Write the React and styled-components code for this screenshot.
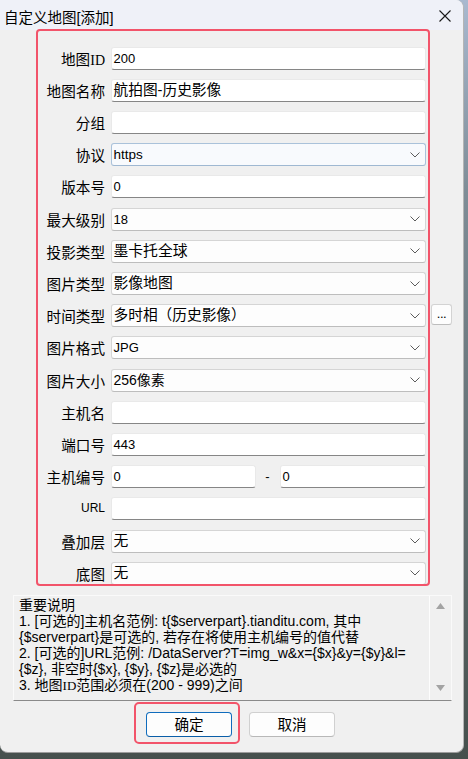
import React from 'react';
import styled, { createGlobalStyle } from 'styled-components';

const Global = createGlobalStyle`
  html, body { margin: 0; padding: 0; }
  body {
    width: 468px;
    height: 759px;
    overflow: hidden;
    background: linear-gradient(180deg, #a9b9cf 0%, #7f8d97 25%, #46504d 100%);
    font-family: "Noto Sans CJK SC", sans-serif;
    color: #000;
  }
`;

const Window = styled.div`
  position: relative;
  width: 464px;
  height: 753px;
  box-sizing: border-box;
  background: #f0f0f0;
  border-radius: 0 8px 8px 8px;
  border-right: 1px solid #b5b5b5;
  border-bottom: 1px solid #9c9c9c;
  overflow: hidden;
  display: flex;
  flex-direction: column;
`;

const TitleBar = styled.div`
  flex: none;
  height: 30px;
  box-sizing: border-box;
  padding: 2px 12px 0 4px;
  background: #eff1f8;
  display: flex;
  align-items: center;
  justify-content: space-between;
  font-family: "Liberation Sans", "Noto Sans CJK SC", sans-serif;
  font-size: 14.5px;
`;

const CloseIcon = () => (
  <svg width="12" height="12" viewBox="0 0 12 12">
    <path d="M0.5 0.5 L11.5 11.5 M11.5 0.5 L0.5 11.5" stroke="#1a1a1a" strokeWidth="1.1" fill="none" />
  </svg>
);

const Form = styled.div`
  position: relative;
  display: grid;
  grid-template-columns: 67px 315px 21px;
  grid-auto-rows: 23px;
  column-gap: 5.5px;
  row-gap: 9.2px;
  padding: 16.7px 0 0 38px;
`;

const Highlight = styled.div`
  position: absolute;
  pointer-events: none;
  border: 2.5px solid #f2546a;
  border-radius: ${p => p.$r || 4}px;
  top: ${p => p.$t}px;
  right: ${p => p.$rt}px;
  bottom: ${p => p.$b}px;
  left: ${p => p.$l}px;
`;

const Label = styled.div`
  grid-column: 1;
  text-align: right;
  white-space: nowrap;
  font-family: ${p => (p.$latin ? '"Liberation Sans", sans-serif' : '"Noto Sans CJK SC", sans-serif')};
  font-size: ${p => (p.$latin ? '12px' : '14.6px')};
  line-height: 23px;
`;

const Serif = styled.span`
  font-family: "Liberation Serif", serif;
  font-size: ${p => p.$size || 14}px;
`;

const Field = styled.div`
  grid-column: 2;
  display: flex;
  align-items: center;
  min-width: 0;
`;

const TextBox = styled.div`
  box-sizing: border-box;
  height: 23px;
  width: ${p => (p.$w ? `${p.$w}px` : '100%')};
  flex: none;
  background: #fff;
  border: 1px solid #e9e9e9;
  border-bottom: 1px solid #868686;
  border-radius: 3px;
  padding: 0 4px 0 2px;
  display: flex;
  align-items: center;
`;

const SelectBox = styled.div`
  box-sizing: border-box;
  height: 23px;
  width: 100%;
  background: ${p => (p.$focused ? '#f8fafd' : '#fdfdfd')};
  border: 1px solid ${p => (p.$focused ? '#aac2da' : '#d5d5d5')};
  border-bottom-color: ${p => (p.$focused ? '#9fb8d2' : '#bdbdbd')};
  border-radius: 3px;
  padding: 0 5px 0 2px;
  display: flex;
  align-items: center;
  justify-content: space-between;
`;

const Value = styled.span`
  font-family: "Liberation Sans", "Noto Sans CJK SC", sans-serif;
  font-size: ${p => p.$size}px;
  line-height: 1;
  white-space: nowrap;
`;

const Chevron = () => (
  <svg width="10" height="6" viewBox="0 0 10 6">
    <path d="M0.5 0.5 L5 5 L9.5 0.5" stroke="#5c5c5c" strokeWidth="1" fill="none" />
  </svg>
);

const Dash = styled.span`
  flex: 1;
  text-align: center;
  font-family: "Liberation Sans", sans-serif;
  font-size: 13px;
`;

const MoreButton = styled.div`
  grid-column: 3;
  box-sizing: border-box;
  width: 21px;
  height: 21px;
  background: #fdfdfd;
  border: 1px solid #d3d3d3;
  border-bottom-color: #bdbdbd;
  border-radius: 3px;
  display: flex;
  align-items: flex-end;
  justify-content: center;
  padding-bottom: 4px;
  font-family: "Liberation Sans", sans-serif;
  font-size: 13px;
  line-height: 1;
  letter-spacing: -0.5px;
`;

const Notes = styled.div`
  box-sizing: border-box;
  margin: 10px 0 0 13px;
  width: 439px;
  height: 106px;
  border: 1px solid #fafafa;
  border-bottom: 1px solid #8a8a8a;
  display: flex;
  flex: none;
`;

const NotesText = styled.div`
  flex: 1;
  padding: 1px 0 0 5px;
  font-family: "Liberation Sans", "Noto Sans CJK SC", sans-serif;
  font-size: 14px;
  line-height: 16px;
  white-space: nowrap;
  overflow: hidden;
`;

const Line = styled.div``;

const ScrollBar = styled.div`
  flex: none;
  width: 21px;
  border-left: 1px solid #fdfdfd;
  display: flex;
  flex-direction: column;
  justify-content: space-between;
  align-items: center;
  padding: 7px 0 9px;
`;

const Arrow = ({ down }) => (
  <svg width="9" height="6" viewBox="0 0 9 6">
    <path d={down ? 'M0 0 L9 0 L4.5 6 Z' : 'M0 6 L9 6 L4.5 0 Z'} fill="#a3a3a3" />
  </svg>
);

const ButtonRow = styled.div`
  display: flex;
  gap: 17px;
  margin-top: 11px;
  padding-left: 146px;
`;

const ButtonWrap = styled.div`
  position: relative;
`;

const Button = styled.div`
  box-sizing: border-box;
  width: 86px;
  height: 25px;
  background: #fdfdfd;
  border: 1px solid ${p => (p.$primary ? '#0f6cbd' : '#d0d0d0')};
  border-bottom-color: ${p => (p.$primary ? '#0a5ea8' : '#b8b8b8')};
  border-radius: 4px;
  display: flex;
  align-items: center;
  justify-content: center;
  font-family: "Noto Sans CJK SC", sans-serif;
  font-size: 14.6px;
  line-height: 1;
`;

const rows = [
  { label: <>地图<Serif>ID</Serif></>, kind: 'text', value: '200', size: 13 },
  { label: '地图名称', kind: 'text', value: '航拍图-历史影像', size: 14.7 },
  { label: '分组', kind: 'text', value: '' },
  { label: '协议', kind: 'select', value: 'https', size: 13.5, focused: true },
  { label: '版本号', kind: 'text', value: '0', size: 13 },
  { label: '最大级别', kind: 'select', value: '18', size: 13 },
  { label: '投影类型', kind: 'select', value: '墨卡托全球', size: 14.8 },
  { label: '图片类型', kind: 'select', value: '影像地图', size: 14.8 },
  { label: '时间类型', kind: 'select', value: '多时相（历史影像）', size: 14.7, more: true },
  { label: '图片格式', kind: 'select', value: 'JPG', size: 13 },
  { label: '图片大小', kind: 'select', value: '256像素', size: 14 },
  { label: '主机名', kind: 'text', value: '' },
  { label: '端口号', kind: 'text', value: '443', size: 13 },
  { label: '主机编号', kind: 'pair', value: ['0', '0'], size: 13 },
  { label: 'URL', kind: 'text', value: '', latin: true },
  { label: '叠加层', kind: 'select', value: '无', size: 14.8 },
  { label: '底图', kind: 'select', value: '无', size: 14.8 },
];

function Row({ row }) {
  let field;
  if (row.kind === 'text') {
    field = (
      <TextBox>
        <Value $size={row.size || 13}>{row.value}</Value>
      </TextBox>
    );
  } else if (row.kind === 'select') {
    field = (
      <SelectBox $focused={row.focused}>
        <Value $size={row.size}>{row.value}</Value>
        <Chevron />
      </SelectBox>
    );
  } else {
    field = (
      <>
        <TextBox $w={145}>
          <Value $size={row.size}>{row.value[0]}</Value>
        </TextBox>
        <Dash>-</Dash>
        <TextBox $w={146}>
          <Value $size={row.size}>{row.value[1]}</Value>
        </TextBox>
      </>
    );
  }
  return (
    <>
      <Label $latin={row.latin}>{row.label}</Label>
      <Field>{field}</Field>
      {row.more && <MoreButton>...</MoreButton>}
    </>
  );
}

export default function App() {
  return (
    <>
      <Global />
      <Window>
        <TitleBar>
          <span>自定义地图[添加]</span>
          <CloseIcon />
        </TitleBar>
        <Form>
          {rows.map((r, i) => (
            <Row key={i} row={r} />
          ))}
          <Highlight $t={-1} $l={36} $rt={33} $b={-1.5} />
        </Form>
        <Notes>
          <NotesText>
            <Line>重要说明</Line>
            <Line>1. [可选的]主机名范例: t{'{$serverpart}'}.tianditu.com, 其中</Line>
            <Line>{'{$serverpart}'}是可选的, 若存在将使用主机编号的值代替</Line>
            <Line>2. [可选的]URL范例: /DataServer?T=img_w&amp;x={'{$x}'}&amp;y={'{$y}'}&amp;l=</Line>
            <Line>{'{$z}'}, 非空时{'{$x}'}, {'{$y}'}, {'{$z}'}是必选的</Line>
            <Line>3. 地图<Serif $size={13}>ID</Serif>范围必须在(200 - 999)之间</Line>
          </NotesText>
          <ScrollBar>
            <Arrow />
            <Arrow down />
          </ScrollBar>
        </Notes>
        <ButtonRow>
          <ButtonWrap>
            <Button $primary>确定</Button>
            <Highlight $t={-10} $l={-12} $rt={-8} $b={-7} $r={5} />
          </ButtonWrap>
          <Button>取消</Button>
        </ButtonRow>
      </Window>
    </>
  );
}
